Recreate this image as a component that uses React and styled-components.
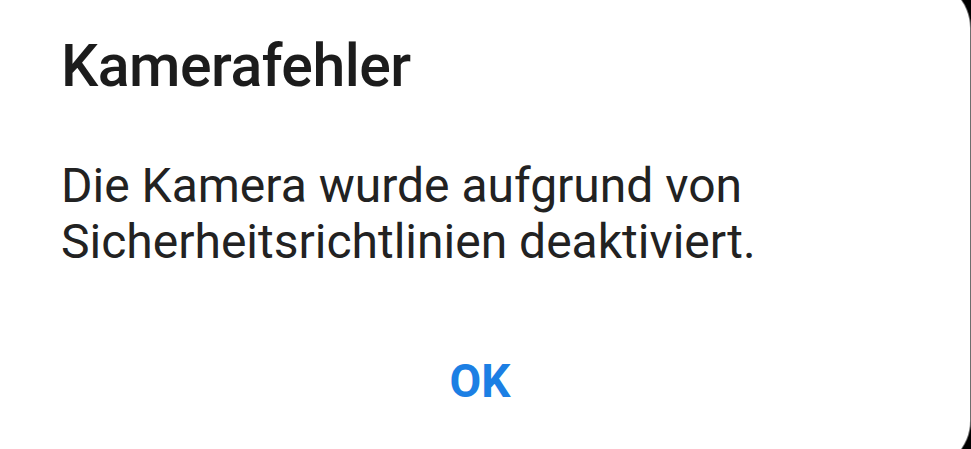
import styled, { createGlobalStyle } from "styled-components";

const GlobalStyle = createGlobalStyle`
  html, body {
    margin: 0;
    padding: 0;
    background: #000;
    overflow: hidden;
  }
`;

const Screen = styled.div`
  width: 100vw;
  height: 100vh;
  overflow: hidden;
  background: #000;
  display: flex;
  justify-content: flex-end;
  align-items: flex-start;
`;

const Dialog = styled.div`
  box-sizing: border-box;
  flex: none;
  margin: -20px 1px 0 0;
  width: calc(100vw + 9px);
  height: 489px;
  background: #fff;
  border-radius: 0 48px 48px 0;
  box-shadow: 1px 0 0 #6e6e6e;
  display: flex;
  flex-direction: column;
  padding: 50px 0 0 71px;
  font-family: Roboto, "Noto Sans", sans-serif;
`;

const Title = styled.h1`
  margin: 0;
  font-size: 59px;
  line-height: 72px;
  font-weight: 500;
  color: #1c1c1c;
  letter-spacing: -0.5px;
`;

const Message = styled.p`
  margin: 56px 0 0;
  font-size: 48px;
  line-height: 56px;
  font-weight: 400;
  color: #222;
`;

const Actions = styled.div`
  display: flex;
  justify-content: center;
  margin: 84px 0 0 -71px;
`;

const TextButton = styled.button`
  border: 0;
  background: none;
  padding: 0;
  font-family: Roboto, "Noto Sans", sans-serif;
  font-size: 46px;
  line-height: 54px;
  font-weight: 700;
  color: #1c7fe4;
  cursor: pointer;
`;

export default function App() {
  return (
    <Screen>
      <GlobalStyle />
      <Dialog>
        <Title>Kamerafehler</Title>
        <Message>
          Die Kamera wurde aufgrund von
          <br />
          Sicherheitsrichtlinien deaktiviert.
        </Message>
        <Actions>
          <TextButton>OK</TextButton>
        </Actions>
      </Dialog>
    </Screen>
  );
}
